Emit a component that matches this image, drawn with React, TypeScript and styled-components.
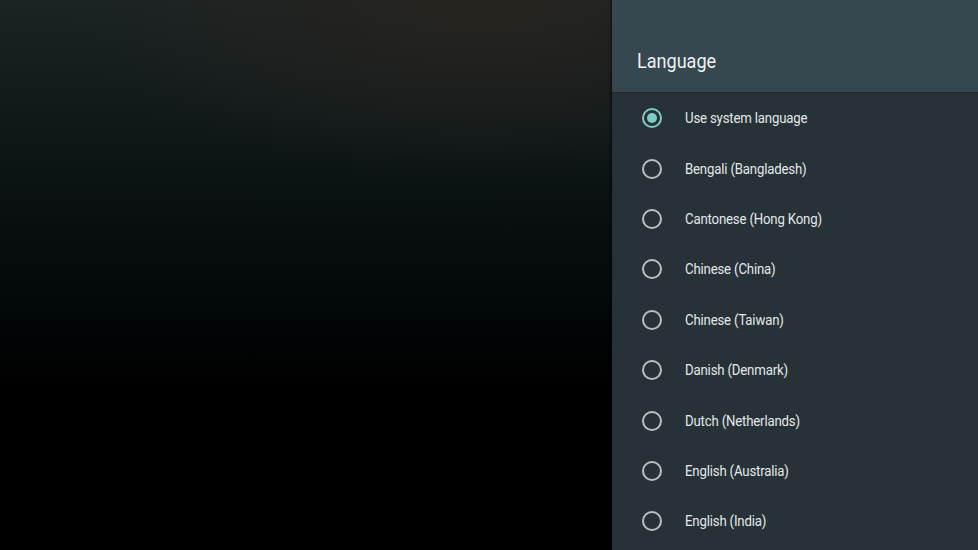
import React from "react";
import styled, { createGlobalStyle } from "styled-components";

const GlobalStyle = createGlobalStyle`
  html, body {
    margin: 0;
    padding: 0;
    width: 978px;
    height: 550px;
    overflow: hidden;
    background: #000;
  }
  body {
    font-family: Roboto, "Noto Sans", sans-serif;
  }
`;

const Screen = styled.div`
  display: flex;
  width: 978px;
  height: 550px;
  background:
    radial-gradient(ellipse 420px 180px at 480px 0px, rgba(40, 36, 30, 0.9), rgba(40, 36, 30, 0) 100%),
    linear-gradient(180deg, #1b2325 0%, #0d1416 30%, #03080a 55%, #000 70%, #000 100%);
`;

const Backdrop = styled.div`
  flex: 1;
`;

const Panel = styled.aside`
  width: 366px;
  height: 550px;
  display: flex;
  flex-direction: column;
  background: #263238;
  box-shadow: -1px 0 2px rgba(0, 0, 0, 0.6);
`;

const Header = styled.header`
  height: 93px;
  box-sizing: border-box;
  display: flex;
  align-items: flex-end;
  padding: 0 0 19px 25px;
  background: #37474f;
  border-bottom: 1px solid #1e272c;
`;

/* Roboto Condensed is not installed, so the glyphs are narrowed */
const Title = styled.h1`
  margin: 0;
  display: inline-block;
  font-family: Roboto, sans-serif;
  font-weight: 400;
  font-size: 21px;
  line-height: 24px;
  color: #eef1f2;
  transform: scaleX(0.86);
  transform-origin: left center;
`;

const List = styled.ul`
  list-style: none;
  margin: 0;
  padding: 0;
`;

const Row = styled.li`
  height: 50.4px;
  display: flex;
  align-items: center;
  padding-left: 30px;
  gap: 23px;
`;

const Radio = styled.span<{ $checked?: boolean }>`
  width: 20px;
  height: 20px;
  box-sizing: border-box;
  border-radius: 50%;
  border: 2px solid ${({ $checked }) => ($checked ? "#80cbc4" : "#b9bfc2")};
  display: flex;
  align-items: center;
  justify-content: center;
  flex-shrink: 0;
  &::after {
    content: "";
    width: 10px;
    height: 10px;
    border-radius: 50%;
    background: #80cbc4;
    display: ${({ $checked }) => ($checked ? "block" : "none")};
  }
`;

const Label = styled.span`
  display: inline-block;
  font-family: Roboto, sans-serif;
  font-size: 15px;
  letter-spacing: -0.2px;
  color: #e4e7e8;
  white-space: nowrap;
  transform: scaleX(0.88);
  transform-origin: left center;
`;

const languages = [
  "Use system language",
  "Bengali (Bangladesh)",
  "Cantonese (Hong Kong)",
  "Chinese (China)",
  "Chinese (Taiwan)",
  "Danish (Denmark)",
  "Dutch (Netherlands)",
  "English (Australia)",
  "English (India)",
];

export default function App() {
  return (
    <>
      <GlobalStyle />
      <Screen>
        <Backdrop />
        <Panel>
          <Header>
            <Title>Language</Title>
          </Header>
          <List>
            {languages.map((name, i) => (
              <Row key={name}>
                <Radio $checked={i === 0} />
                <Label>{name}</Label>
              </Row>
            ))}
          </List>
        </Panel>
      </Screen>
    </>
  );
}
